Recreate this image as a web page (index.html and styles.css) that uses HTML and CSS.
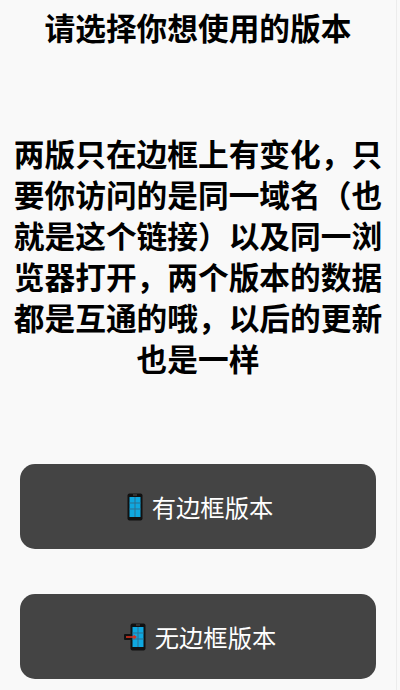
FILE: index.html
```html
<!DOCTYPE html>
<html lang="zh-CN">
<head>
    <meta charset="UTF-8">
    <meta name="viewport" content="width=device-width, initial-scale=1.0">
    <title>请选择你想使用的版本</title>
    <link rel="stylesheet" href="styles.css">
</head>
<body>
    <div class="container">
        <h1>请选择你想使用的版本</h1>
        <h2>两版只在边框上有变化，只要你访问的是同一域名（也就是这个链接）以及同一浏览器打开，两个版本的数据都是互通的哦，以后的更新也是一样</h2>
        <a class="version-btn" href="#">
            <svg class="phone-icon" viewBox="0 0 16 28" aria-hidden="true">
                <rect x="0.5" y="0.5" width="15" height="27" rx="2" fill="#111"/>
                <rect x="2.5" y="4" width="11" height="20" fill="#0fa8e0"/>
                <path d="M2.5 10h11M2.5 16h11M8 4v20" stroke="#2f6f8f" stroke-width="1"/>
                <rect x="6" y="1.5" width="4" height="1" fill="#555"/>
            </svg>
            <span>有边框版本</span>
        </a>
        <a class="version-btn" href="#">
            <svg class="phone-icon" viewBox="0 0 22 28" aria-hidden="true">
                <rect x="6.5" y="0.5" width="15" height="27" rx="2" fill="#111"/>
                <rect x="8.5" y="4" width="11" height="20" fill="#0fa8e0"/>
                <path d="M8.5 10h11M8.5 16h11M14 4v20" stroke="#2f6f8f" stroke-width="1"/>
                <rect x="12" y="1.5" width="4" height="1" fill="#555"/>
                <rect x="0" y="11" width="7" height="6" rx="1" fill="#111"/>
                <path d="M2 14h8" stroke="#d8321f" stroke-width="1.6"/>
                <path d="M9.5 11.5l3.5 2.5-3.5 2.5z" fill="#d8321f"/>
            </svg>
            <span>无边框版本</span>
        </a>
    </div>
</body>
</html>
```

FILE: styles.css
```css
html {
    background: #f9f9f9;
}

body {
    margin: 0;
    height: 690px;
    overflow: hidden;
    font-family: "Noto Sans CJK SC", "Liberation Sans", sans-serif;
    color: #000;
}

.container {
    width: 397px;
    height: 690px;
    box-sizing: border-box;
    border-right: 1px solid #ececec;
    padding: 0 20px;
    display: flex;
    flex-direction: column;
}

h1 {
    margin: 6px 0 0;
    font-size: 30.7px;
    line-height: 41px;
    text-align: center;
    font-weight: 700;
    white-space: nowrap;
}

h2 {
    margin: 85px -8px 0;
    font-size: 30.7px;
    line-height: 41px;
    text-align: center;
    font-weight: 700;
}

.version-btn {
    height: 85px;
    margin-top: 45px;
    padding-left: 4px;
    border-radius: 15px;
    background: #444;
    color: #fff;
    font-size: 24.3px;
    text-decoration: none;
    display: flex;
    align-items: center;
    justify-content: center;
    gap: 9px;
}

h2 + .version-btn {
    margin-top: 86px;
}

.phone-icon {
    height: 28px;
    width: auto;
}
```
